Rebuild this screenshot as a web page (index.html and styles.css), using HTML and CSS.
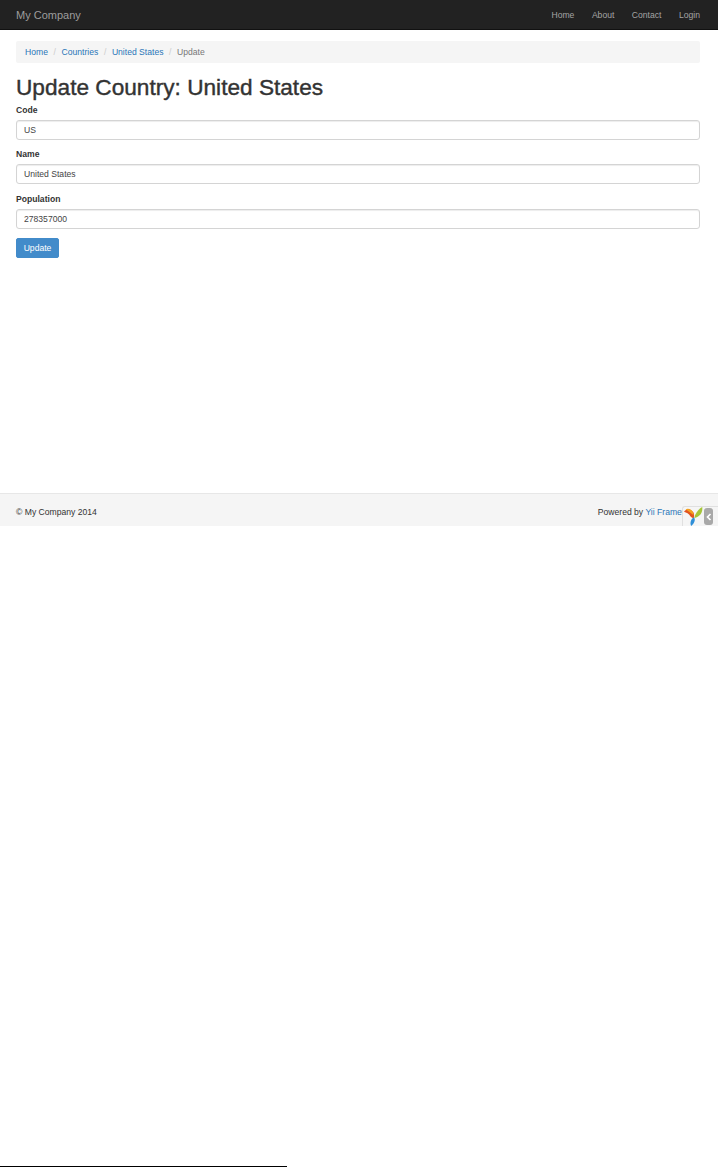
FILE: index.html
```html
<!DOCTYPE html>
<html lang="en">
<head>
<meta charset="utf-8">
<title>Update Country: United States</title>
<link rel="stylesheet" href="styles.css">
</head>
<body>
<div class="page">
  <nav class="navbar">
    <a class="brand" href="#">My Company</a>
    <ul class="nav">
      <li><a href="#">Home</a></li>
      <li><a href="#">About</a></li>
      <li><a href="#">Contact</a></li>
      <li><a href="#">Login</a></li>
    </ul>
  </nav>
  <main class="container">
    <ul class="breadcrumb">
      <li><a href="#">Home</a></li>
      <li class="sep">/</li>
      <li><a href="#">Countries</a></li>
      <li class="sep">/</li>
      <li><a href="#">United States</a></li>
      <li class="sep">/</li>
      <li class="active">Update</li>
    </ul>
    <h1>Update Country: United States</h1>
    <form class="form">
      <div class="field field-first">
        <label for="code">Code</label>
        <input id="code" type="text" value="US">
      </div>
      <div class="field">
        <label for="name">Name</label>
        <input id="name" type="text" value="United States">
      </div>
      <div class="field field-last">
        <label for="population">Population</label>
        <input id="population" type="text" value="278357000">
      </div>
      <button class="btn" type="button">Update</button>
    </form>
  </main>
  <footer class="footer">
    <span>© My Company 2014</span>
    <span class="powered">Powered by <a href="#">Yii Framework</a></span>
    <div class="debug">
      <svg class="yii" viewBox="0 0 24 24" width="19" height="19" aria-hidden="true">
        <path d="M0 6 C3 1 9 2 12 7 C13 9 13 11 12.5 14 C9 14 8 11 6 9 C4 7 2 7 0 6Z" fill="#e2541f"/>
        <path d="M2 3 C5 1 9 3 11 6 C12 8 12 9 12 10 C9 8 6 5 2 3Z" fill="#f4a11d"/>
        <path d="M13 14 C14 8 18 3 23 0 C24 7 20 12 13 14Z" fill="#a5c639"/>
        <path d="M12.5 13 C15 16 13 21 9 24 C7 20 9 15 12.5 13Z" fill="#2f8fd8"/>
      </svg>
      <span class="toggle"><svg viewBox="0 0 8 10" width="6" height="8" aria-hidden="true"><path d="M6 1 L2 5 L6 9" fill="none" stroke="#fff" stroke-width="2.2"/></svg></span>
    </div>
  </footer>
  <div class="rule"></div>
</div>
</body>
</html>
```

FILE: styles.css
```css
* { box-sizing: border-box; }
html, body { margin: 0; padding: 0; background: #fff; }
body {
  font-family: "Liberation Sans", Arial, sans-serif;
  font-size: 8.6px;
  color: #333;
}
a { color: #2a76b8; text-decoration: none; }
ul { list-style: none; margin: 0; padding: 0; }

.page {
  height: 1167px;
  display: flex;
  flex-direction: column;
}

.navbar {
  height: 30px;
  flex: none;
  background: #222;
  border-bottom: 1px solid #111;
  display: flex;
  align-items: center;
  justify-content: space-between;
  padding: 0 18px 0 16px;
}
.brand { color: #9d9d9d; font-size: 11px; }
.nav { display: flex; gap: 17.5px; }
.nav a { color: #a4a4a4; font-size: 8.6px; }

.container {
  flex: none;
  height: 463px;
  padding: 11px 18px 0 16px;
}

.breadcrumb {
  height: 22px;
  display: flex;
  align-items: center;
  gap: 5.6px;
  padding: 0 9px;
  background: #f5f5f5;
  border-radius: 2px;
  font-size: 8.6px;
}
.sep { color: #ccc; }
.active { color: #777; }

h1 {
  margin: 12px 0 0;
  font-size: 22.65px;
  line-height: 25px;
  font-weight: 500;
  color: #333;
  -webkit-text-stroke: 0.4px #333;
}

.form { margin-top: 5px; }
.field { margin-bottom: 10px; }
.field-first { margin-bottom: 9px; }
.field-last { margin-bottom: 9px; }
label {
  display: block;
  height: 11px;
  line-height: 11px;
  margin-bottom: 4px;
  font-size: 8.6px;
  font-weight: bold;
  color: #333;
}
input {
  display: block;
  width: 100%;
  height: 20px;
  padding: 0 7px;
  border: 1px solid #d4d4d4;
  border-radius: 3px;
  box-shadow: inset 0 1px 1px rgba(0,0,0,.075);
  background: #fff;
  color: #444;
  font: 8.6px "Liberation Sans", Arial, sans-serif;
}
.btn {
  display: block;
  width: 43px;
  height: 20px;
  padding: 0;
  border: 1px solid #428bca;
  border-radius: 2px;
  background: #428bca;
  color: #fff;
  font: 8.6px "Liberation Sans", Arial, sans-serif;
}

.footer {
  position: relative;
  flex: none;
  height: 33px;
  background: #f5f5f5;
  border-top: 1px solid #e7e7e7;
  display: flex;
  align-items: center;
  justify-content: space-between;
  padding: 4px 18px 0 16px;
  overflow: hidden;
}
.debug {
  position: absolute;
  right: 0;
  bottom: 0;
  width: 36px;
  height: 20px;
  display: flex;
  align-items: center;
  gap: 1px;
  padding-left: 1px;
  background: #f5f5f5;
  border: 1px solid #e0e0e0;
  border-bottom: 0;
  border-right: 0;
  border-radius: 3px 0 0 0;
}
.yii { flex: none; }
.toggle {
  flex: none;
  width: 9px;
  height: 17px;
  border-radius: 3px;
  background: #a9a9a9;
  display: flex;
  align-items: center;
  justify-content: center;
}

.rule {
  margin-top: auto;
  width: 287px;
  height: 1px;
  background: #000;
}
```
